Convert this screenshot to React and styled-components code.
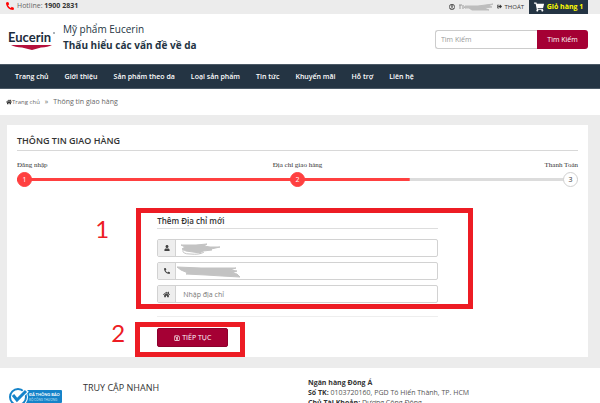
import React, { useState } from 'react';
import styled, { createGlobalStyle } from 'styled-components';
import {
  FaPhoneAlt,
  FaRegUserCircle,
  FaSignOutAlt,
  FaShoppingCart,
  FaHome,
  FaUser,
  FaRegSave,
} from 'react-icons/fa';

const GlobalStyle = createGlobalStyle`
    * {
        box-sizing: border-box;
    }
    body {
        margin: 0;
        background: #fff;
        color: #333;
        font-family: "Open Sans", "Noto Sans", sans-serif;
        font-size: 7px;
        line-height: 10px;
    }
    h1, h2, h3, p, ol, ul {
        margin: 0;
        padding: 0;
        list-style: none;
    }
    a {
        color: inherit;
        text-decoration: none;
    }
    button, input {
        font-family: inherit;
    }
`;

const Page = styled.div`
    height: 100vh;
    overflow: hidden;
`;

const TopBar = styled.div`
    display: flex;
    align-items: center;
    height: 14px;
    padding: 0 12px 0 6px;
    background: #ececec;
`;

const Hotline = styled.p`
    flex: 1;
    display: flex;
    align-items: center;
    gap: 3px;
    padding-bottom: 2px;
    color: #666;

    svg {
        color: #f00;
    }
    strong {
        color: #333;
    }
`;

const Account = styled.div`
    display: flex;
    align-items: center;
    gap: 3px;
    margin-right: 5px;
    padding-bottom: 1px;
    font-size: 6px;
`;

const Cart = styled.a`
    display: flex;
    align-items: center;
    justify-content: center;
    gap: 3px;
    width: 59px;
    height: 14px;
    padding-bottom: 1px;
    background: #243443;
    color: #ff0;
    font-weight: 700;
    font-size: 7px;

    svg {
        color: #fff;
    }
`;

const Header = styled.header`
    display: flex;
    align-items: center;
    height: 50px;
    padding: 0 12px 0 8px;
`;

const Slogan = styled.div`
    flex: 1;
    margin-left: 8px;
    padding-bottom: 4px;
    color: #243443;
    font-size: 10px;
    line-height: 16px;
`;

const SearchForm = styled.form`
    display: flex;
    width: 153px;
    height: 19px;
`;

const SearchInput = styled.input`
    flex: 1;
    min-width: 0;
    padding: 0 5px;
    border: 1px solid #ccc;
    border-right: 0;
    border-radius: 3px 0 0 3px;
    font-size: 7px;

    &::placeholder {
        color: #999;
    }
`;

const SearchButton = styled.button`
    width: 51px;
    padding: 0;
    border: 0;
    border-radius: 0 3px 3px 0;
    background: #a50034;
    color: #fff;
    font-size: 7px;
`;

const Nav = styled.nav`
    display: flex;
    align-items: center;
    gap: 16px;
    height: 25px;
    padding: 0 15px;
    border-top: 1px solid #4b5966;
    border-bottom: 1px solid #4b5966;
    background: #243443;
    color: #fff;
    font-weight: 600;
    font-size: 7px;
    white-space: nowrap;
`;

const Breadcrumb = styled.nav`
    display: flex;
    align-items: center;
    height: 26px;
    padding: 0 6px;
    color: #666;

    a {
        display: flex;
        align-items: center;
        font-size: 6px;
    }
    svg {
        color: #333;
    }
    i {
        margin: 0 5px;
        font-style: normal;
    }
`;

const Main = styled.main`
    padding: 10px 12px 11px 7px;
    background: #ececec;
`;

const Card = styled.section`
    padding: 9px 10px 10px;
    background: #fff;
`;

const CardTitle = styled.h1`
    padding-bottom: 3px;
    border-bottom: 1px solid #d8d8d8;
    font-weight: 600;
    font-size: 9px;
    line-height: 13px;
`;

const Steps = styled.ol`
    display: flex;
    justify-content: space-between;
    margin-top: 9px;
    background:
        linear-gradient(#ff4040, #ff4040) 0 18px / 70% 3px no-repeat,
        linear-gradient(#dcdcdc, #dcdcdc) 0 18px / 100% 3px no-repeat;
`;

const Step = styled.li`
    display: flex;
    flex: 1;
    flex-direction: column;
    align-items: ${(props) => props.$align};
    gap: 2px;
    font-family: "Liberation Serif", serif;
    font-size: 7px;
`;

const StepNumber = styled.span`
    width: 15px;
    height: 15px;
    border: 1px solid ${(props) => (props.$done ? '#ff4040' : '#d0d0d0')};
    border-radius: 50%;
    background: ${(props) => (props.$done ? '#ff4040' : '#fff')};
    color: ${(props) => (props.$done ? '#fff' : '#333')};
    font-family: "Open Sans", sans-serif;
    font-size: 7px;
    line-height: 13px;
    text-align: center;
`;

const AddressForm = styled.form`
    position: relative;
    width: 50%;
    margin: 28px auto 0;
`;

const FormTitle = styled.h2`
    margin-bottom: 10px;
    padding-bottom: 1px;
    border-bottom: 1px solid #ddd;
    font-weight: 600;
    font-size: 8px;
    line-height: 12px;
`;

const Field = styled.div`
    position: relative;
    display: flex;
    height: 18px;
    margin-bottom: 5px;
    border: 1px solid #d2d2d2;
    border-radius: 2px;
`;

const FieldIcon = styled.label`
    display: flex;
    align-items: center;
    justify-content: center;
    width: 18px;
    border-right: 1px solid #d2d2d2;
    background: #eee;
    color: #444;
`;

const FieldInput = styled.input`
    flex: 1;
    min-width: 0;
    padding: 0 7px;
    border: 0;
    background: transparent;
    font-size: 7px;

    &::placeholder {
        color: #777;
    }
`;

const Scribble = styled.svg`
    position: absolute;
    top: 1px;
    left: 18px;
    pointer-events: none;
`;

const Divider = styled.hr`
    margin: 13px 0 11px;
    border: 0;
    border-top: 1px solid #eee;
`;

const SubmitButton = styled.button`
    display: flex;
    align-items: center;
    justify-content: center;
    gap: 2px;
    width: 71px;
    height: 19px;
    padding: 0;
    border: 1px solid #8c002c;
    border-radius: 2px;
    background: #a50034;
    color: #fff;
    font-size: 7px;
`;

// red marker boxes drawn over the form
const Marker = styled.div`
    position: absolute;
    top: ${(props) => props.$top}px;
    left: ${(props) => props.$left}px;
    width: ${(props) => props.$width};
    height: ${(props) => props.$height}px;
    border: 5px solid #ed1c24;
    pointer-events: none;
`;

const MarkerNumber = styled.span`
    position: absolute;
    top: ${(props) => props.$top}px;
    left: ${(props) => props.$left}px;
    color: #ed1c24;
    font-family: Lato, sans-serif;
    font-size: 24px;
    line-height: 24px;
`;

const Footer = styled.footer`
    display: flex;
    padding: 10px 8px 0;
`;

const Badge = styled.div`
    width: 75px;
    padding-top: 9px;
`;

const QuickLinks = styled.h3`
    width: 225px;
    font-weight: 400;
    font-size: 9px;
    line-height: 19px;
`;

const Bank = styled.div`
    flex: 1;
    color: #555;

    strong {
        color: #333;
    }
`;

const menu = [
  'Trang chủ',
  'Giới thiệu',
  'Sản phẩm theo da',
  'Loại sản phẩm',
  'Tin tức',
  'Khuyến mãi',
  'Hỗ trợ',
  'Liên hệ',
];

const steps = [
  { label: 'Đăng nhập', align: 'flex-start', done: true },
  { label: 'Địa chỉ giao hàng', align: 'center', done: true },
  { label: 'Thanh Toán', align: 'flex-end', done: false },
];

const Logo = () => (
  <svg width="47" height="24" viewBox="0 0 47 24" role="img" aria-label="Eucerin">
    <text x="0" y="15" fill="#1c2b3c" fontFamily="Lato, sans-serif" fontWeight="700" fontSize="13">Eucerin</text>
    <circle cx="46" cy="6" r="0.7" fill="#1c2b3c" />
    <path d="M3 18H44Q40 20 33 20.5L24 23L14 20.5Q7 20 3 18Z" fill="#b5103c" />
  </svg>
);

const App = () => {
  const [search, setSearch] = useState('');
  const [address, setAddress] = useState('');

  return (
    <Page>
      <GlobalStyle />
      <TopBar>
        <Hotline>
          <FaPhoneAlt size={8} />
          <span>Hotline: <strong>1900 2831</strong></span>
        </Hotline>
        <Account>
          <FaRegUserCircle size={6} />
          <svg width="36" height="8" viewBox="0 0 36 8">
            <path d="M1 2h3M2 2v4M5 2v4M6 4l2 1" stroke="#999" fill="none" />
            <path d="M7 3L20 3L35 1L30 3L34 4L26 5L31 7L14 7L11 5L7 5Z" fill="#bdbdbd" stroke="#bdbdbd" />
          </svg>
          <FaSignOutAlt size={5} />
          <a href="#logout">THOÁT</a>
        </Account>
        <Cart href="#cart">
          <FaShoppingCart size={10} />
          Giỏ hàng 1
        </Cart>
      </TopBar>
      <Header>
        <Logo />
        <Slogan>
          <p>Mỹ phẩm Eucerin</p>
          <p><strong>Thấu hiểu các vấn đề về da</strong></p>
        </Slogan>
        <SearchForm>
          <SearchInput
            aria-label="Tìm Kiếm"
            placeholder="Tìm Kiếm"
            value={search}
            onChange={(e) => setSearch(e.target.value)}
          />
          <SearchButton type="button">Tìm Kiếm</SearchButton>
        </SearchForm>
      </Header>
      <Nav>
        {menu.map((item) => (
          <a key={item} href="#menu">{item}</a>
        ))}
      </Nav>
      <Breadcrumb>
        <a href="#home"><FaHome size={6} />Trang chủ</a>
        <i>»</i>
        <span>Thông tin giao hàng</span>
      </Breadcrumb>
      <Main>
        <Card>
          <CardTitle>THÔNG TIN GIAO HÀNG</CardTitle>
          <Steps>
            {steps.map((step, index) => (
              <Step key={step.label} $align={step.align}>
                {step.label}
                <StepNumber $done={step.done}>{index + 1}</StepNumber>
              </Step>
            ))}
          </Steps>
          <AddressForm>
            <FormTitle>Thêm Địa chỉ mới</FormTitle>
            <Field>
              <FieldIcon htmlFor="name" aria-label="Tên"><FaUser size={6} /></FieldIcon>
              <FieldInput id="name" />
              <Scribble width="66" height="15" viewBox="0 0 66 15">
                <path d="M5 4L20 4L31 3L28 5L34 6L44 6L35 8L36 9L27 10L24 12L10 10L6 8L9 6Z" fill="#c3c3c3" stroke="#c3c3c3" strokeLinejoin="round" />
                <path d="M7 9Q6 13 14 13Q24 14 28 11" fill="none" stroke="#c3c3c3" />
              </Scribble>
            </Field>
            <Field>
              <FieldIcon htmlFor="phone" aria-label="Điện thoại"><FaPhoneAlt size={6} /></FieldIcon>
              <FieldInput id="phone" type="tel" />
              <Scribble width="66" height="15" viewBox="0 0 66 15">
                <path d="M1 3L25 4L60 4L54 6L61 7L56 9L61 10L64 13L46 12L30 11L10 10L12 9L5 6Z" fill="#c3c3c3" stroke="#c3c3c3" strokeLinejoin="round" />
              </Scribble>
            </Field>
            <Field>
              <FieldIcon htmlFor="address" aria-label="Địa chỉ"><FaHome size={7} /></FieldIcon>
              <FieldInput
                id="address"
                placeholder="Nhập địa chỉ"
                value={address}
                onChange={(e) => setAddress(e.target.value)}
              />
            </Field>
            <Divider />
            <SubmitButton type="button"><FaRegSave size={6} />TIẾP TỤC</SubmitButton>
            <Marker $top={-7} $left={-21} $width="calc(100% + 56px)" $height={101} />
            <Marker $top={107} $left={-22} $width="110px" $height={35} />
            <MarkerNumber $top={2} $left={-62}>1</MarkerNumber>
            <MarkerNumber $top={106} $left={-46}>2</MarkerNumber>
          </AddressForm>
        </Card>
      </Main>
      <Footer>
        <Badge>
          <svg width="55" height="20" viewBox="0 0 55 20" role="img" aria-label="Đã thông báo Bộ Công Thương">
            <rect x="10" y="3" width="44" height="13" rx="1" fill="#1583c9" />
            <circle cx="10" cy="10" r="10" fill="#fff" />
            <circle cx="10" cy="10" r="8" fill="#fff" stroke="#1583c9" strokeWidth="2" />
            <path d="M5 8L9 13L19 3" fill="none" stroke="#fff" strokeWidth="5" />
            <path d="M5 8L9 13L18 4" fill="none" stroke="#1583c9" strokeWidth="3" />
            <text x="21" y="9" fill="#fff" fontSize="4" fontWeight="700" fontFamily="Lato, sans-serif">ĐÃ THÔNG BÁO</text>
            <text x="21" y="14" fill="#bfe0f5" fontSize="3" fontFamily="Lato, sans-serif">BỘ CÔNG THƯƠNG</text>
          </svg>
        </Badge>
        <QuickLinks>TRUY CẬP NHANH</QuickLinks>
        <Bank>
          <p><strong>Ngân hàng Đông Á</strong></p>
          <p><strong>Số TK:</strong> 0103720160, PGD Tô Hiến Thành, TP. HCM</p>
          <p><strong>Chủ Tài Khoản:</strong> Dương Công Đông</p>
        </Bank>
      </Footer>
    </Page>
  );
};

export default App;
